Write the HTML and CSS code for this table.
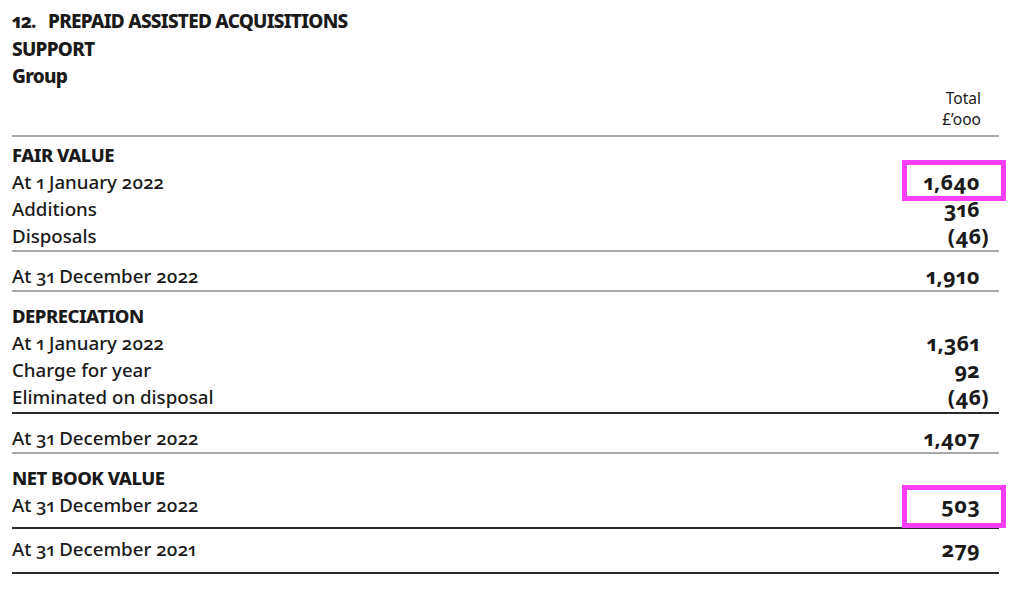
FILE: index.html
```html
<!DOCTYPE html>
<html>
<head>
<meta charset="utf-8">
<link rel="stylesheet" href="styles.css">
</head>
<body>
<div class="page">
  <div class="title">
    <div><span class="num">12.</span>PREPAID ASSISTED ACQUISITIONS</div>
    <div>SUPPORT</div>
    <div>Group</div>
  </div>
  <div class="head">
    <div>Total</div>
    <div>£’ooo</div>
  </div>
  <div class="sec sec-first line-gray">
    <div class="row"><span class="lbl b">FAIR VALUE</span><span class="val"></span></div>
    <div class="row"><span class="lbl">At 1 January 2022</span><span class="val hl">1,640</span></div>
    <div class="row"><span class="lbl">Additions</span><span class="val">316</span></div>
    <div class="row"><span class="lbl">Disposals</span><span class="val neg">(46)</span></div>
  </div>
  <div class="sec sec-total line-gray">
    <div class="row"><span class="lbl">At 31 December 2022</span><span class="val">1,910</span></div>
  </div>
  <div class="sec sec-mid line-dark">
    <div class="row"><span class="lbl b">DEPRECIATION</span><span class="val"></span></div>
    <div class="row"><span class="lbl">At 1 January 2022</span><span class="val">1,361</span></div>
    <div class="row"><span class="lbl">Charge for year</span><span class="val">92</span></div>
    <div class="row"><span class="lbl">Eliminated on disposal</span><span class="val neg">(46)</span></div>
  </div>
  <div class="sec sec-total line-gray">
    <div class="row"><span class="lbl">At 31 December 2022</span><span class="val">1,407</span></div>
  </div>
  <div class="sec sec-nbv line-dark">
    <div class="row"><span class="lbl b">NET BOOK VALUE</span><span class="val"></span></div>
    <div class="row"><span class="lbl">At 31 December 2022</span><span class="val hl hl-low">503</span></div>
  </div>
  <div class="sec sec-last line-dark">
    <div class="row"><span class="lbl">At 31 December 2021</span><span class="val">279</span></div>
  </div>
</div>
</body>
</html>
```
FILE: styles.css
```css
html, body {
  margin: 0;
  padding: 0;
  background: #fff;
}
body {
  font-family: "Noto Sans", "Open Sans", sans-serif;
  font-variant-numeric: oldstyle-nums proportional-nums;
  color: #1a1a1a;
}
.page {
  width: 987px;
  margin-left: 12px;
}
.title {
  padding-top: 8px;
  font-size: 19px;
  font-weight: 800;
  line-height: 27.5px;
  letter-spacing: -0.75px;
}
.title .num {
  display: inline-block;
  width: 36px;
}
.head {
  margin-top: -3px;
  text-align: right;
  padding-right: 18px;
  font-size: 15.5px;
  line-height: 21px;
  padding-bottom: 5px;
  border-bottom: 2px solid #a9a9a9;
}
.sec {
  display: flex;
  flex-direction: column;
}
.line-gray { border-bottom: 2px solid #a9a9a9; }
.line-dark { border-bottom: 2px solid #2a2a2a; }
.sec-first { padding-top: 4px; padding-bottom: 1px; }
.sec-total { padding-top: 10px; padding-bottom: 1px; }
.sec-mid { padding-top: 10px; padding-bottom: 2px; }
.sec-nbv { padding-top: 10px; padding-bottom: 9px; }
.sec-last { padding-top: 6px; padding-bottom: 10px; }
.row {
  display: flex;
  justify-content: space-between;
  align-items: center;
  height: 27px;
  font-size: 18.7px;
  font-weight: 500;
}
.lbl.b {
  font-size: 18.5px;
  font-weight: 800;
  letter-spacing: -0.5px;
}
.val {
  position: relative;
  font-weight: 700;
  font-size: 21.5px;
  line-height: 27px;
  letter-spacing: 0.4px;
  padding-right: 19px;
}
.val.neg {
  padding-right: 10px;
}
.val.hl::after {
  content: "";
  position: absolute;
  top: -8px;
  bottom: -6px;
  right: -7px;
  width: 104px;
  border: 5px solid #fb3ef7;
  box-sizing: border-box;
}
.val.hl-low::after {
  top: -6px;
  bottom: -10px;
}
```
